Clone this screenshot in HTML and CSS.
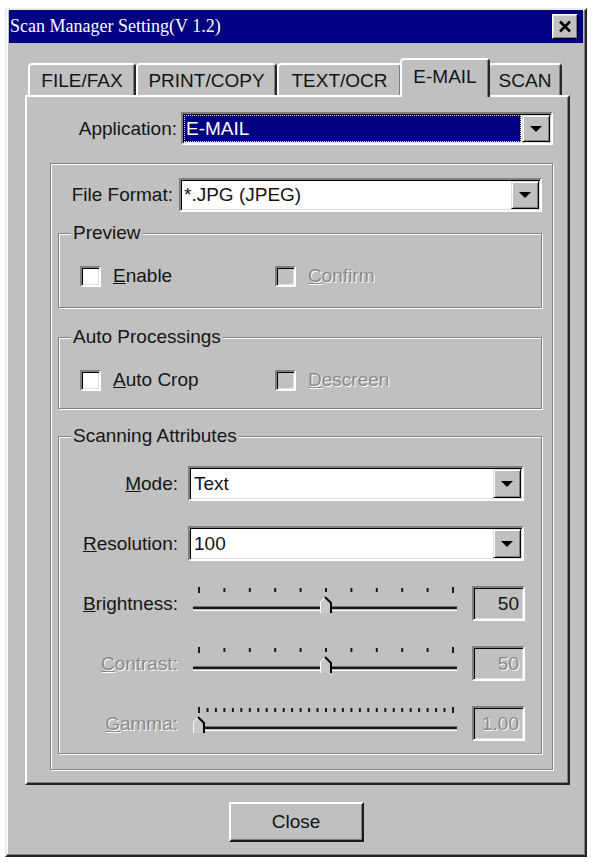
FILE: index.html
```html
<!DOCTYPE html>
<html>
<head>
<meta charset="utf-8">
<title>Scan Manager Setting</title>
<link rel="stylesheet" href="styles.css">
</head>
<body>
<div class="window">
  <div class="titlebar">
    <span class="title">Scan Manager Setting(V 1.2)</span>
    <button class="xbtn" aria-label="Close"><svg width="14" height="13" viewBox="0 0 14 13"><path d="M2 1.5L12 11.5M12 1.5L2 11.5" stroke="#000" stroke-width="2.6" fill="none"/></svg></button>
  </div>

  <div class="tabs">
    <div class="tab t1">FILE/FAX</div>
    <div class="tab t2">PRINT/COPY</div>
    <div class="tab t3">TEXT/OCR</div>
    <div class="tab t4 active">E-MAIL</div>
    <div class="tab t5">SCAN</div>
  </div>

  <div class="panel">
    <div class="app-row">
      <span class="lbl">Application:</span>
      <div class="combo app-combo">
        <div class="field selected"><span>E-MAIL</span></div>
        <div class="dd"><svg width="12" height="6" viewBox="0 0 12 6"><path d="M0 0h12L6 6z" fill="#000"/></svg></div>
      </div>
    </div>

    <div class="outer-group">
      <div class="ff-row">
        <span class="lbl">File Format:</span>
        <div class="combo ff-combo">
          <div class="field">*.JPG (JPEG)</div>
          <div class="dd"><svg width="12" height="6" viewBox="0 0 12 6"><path d="M0 0h12L6 6z" fill="#000"/></svg></div>
        </div>
      </div>

      <div class="group preview">
        <div class="legend">Preview</div>
        <div class="cb-row">
          <div class="cb-item first"><span class="cb"></span><span><u>E</u>nable</span></div>
          <div class="cb-item disabled"><span class="cb off"></span><span><u>C</u>onfirm</span></div>
        </div>
      </div>

      <div class="group auto">
        <div class="legend">Auto Processings</div>
        <div class="cb-row">
          <div class="cb-item first"><span class="cb"></span><span><u>A</u>uto Crop</span></div>
          <div class="cb-item disabled"><span class="cb off"></span><span><u>D</u>escreen</span></div>
        </div>
      </div>

      <div class="group scan">
        <div class="legend">Scanning Attributes</div>

        <div class="attr first-attr">
          <span class="lbl"><u>M</u>ode:</span>
          <div class="combo">
            <div class="field pad">Text</div>
            <div class="dd"><svg width="12" height="6" viewBox="0 0 12 6"><path d="M0 0h12L6 6z" fill="#000"/></svg></div>
          </div>
        </div>

        <div class="attr">
          <span class="lbl"><u>R</u>esolution:</span>
          <div class="combo">
            <div class="field pad">100</div>
            <div class="dd"><svg width="12" height="6" viewBox="0 0 12 6"><path d="M0 0h12L6 6z" fill="#000"/></svg></div>
          </div>
        </div>

        <div class="attr slider-row">
          <span class="lbl"><u>B</u>rightness:</span>
          <svg class="slider" width="274" height="35" viewBox="0 0 274 35">
            <path d="M11 1v6M36.4 2v4M61.8 2v4M87.2 2v4M112.6 2v4M138 2v4M163.4 2v4M188.8 2v4M214.2 2v4M239.6 2v4M265 1v6" stroke="#1a1a1a" stroke-width="2" fill="none"/>
            <rect x="5" y="20" width="264" height="1" fill="#707070"/>
            <rect x="5" y="21" width="264" height="2.5" fill="#1a1a1a"/>
            <rect x="5" y="23.5" width="264" height="1.5" fill="#fff"/>
            <path d="M132 27V16l5-5 6 6v10z" fill="#c8c8c8"/>
            <path d="M132.5 27V16l5-5" stroke="#fff" fill="none"/>
            <path d="M137 11l6 6v10" stroke="#000" stroke-width="2" fill="none"/>
          </svg>
          <div class="val">50</div>
        </div>

        <div class="attr slider-row dis">
          <span class="lbl"><u>C</u>ontrast:</span>
          <svg class="slider" width="274" height="35" viewBox="0 0 274 35">
            <path d="M11 1v6M36.4 2v4M61.8 2v4M87.2 2v4M112.6 2v4M138 2v4M163.4 2v4M188.8 2v4M214.2 2v4M239.6 2v4M265 1v6" stroke="#1a1a1a" stroke-width="2" fill="none"/>
            <rect x="5" y="20" width="264" height="1" fill="#707070"/>
            <rect x="5" y="21" width="264" height="2.5" fill="#1a1a1a"/>
            <rect x="5" y="23.5" width="264" height="1.5" fill="#fff"/>
            <path d="M132 27V16l5-5 6 6v10z" fill="#c8c8c8"/>
            <path d="M132.5 27V16l5-5" stroke="#fff" fill="none"/>
            <path d="M137 11l6 6v10" stroke="#000" stroke-width="2" fill="none"/>
          </svg>
          <div class="val">50</div>
        </div>

        <div class="attr slider-row dis">
          <span class="lbl"><u>G</u>amma:</span>
          <svg class="slider" width="274" height="35" viewBox="0 0 274 35">
            <path d="M11 1v6M19.5 2v4M27.9 2v4M36.4 2v4M44.9 2v4M53.3 2v4M61.8 2v4M70.3 2v4M78.7 2v4M87.2 2v4M95.7 2v4M104.1 2v4M112.6 2v4M121.1 2v4M129.5 2v4M138 2v4M146.5 2v4M154.9 2v4M163.4 2v4M171.9 2v4M180.3 2v4M188.8 2v4M197.3 2v4M205.7 2v4M214.2 2v4M222.7 2v4M231.1 2v4M239.6 2v4M248.1 2v4M256.5 2v4M265 1v6" stroke="#1a1a1a" stroke-width="2" fill="none"/>
            <rect x="5" y="20" width="264" height="1" fill="#707070"/>
            <rect x="5" y="21" width="264" height="2.5" fill="#1a1a1a"/>
            <rect x="5" y="23.5" width="264" height="1.5" fill="#fff"/>
            <path d="M5 27V16l5-5 6 6v10z" fill="#c8c8c8"/>
            <path d="M5.5 27V16l5-5" stroke="#fff" fill="none"/>
            <path d="M10 11l6 6v10" stroke="#000" stroke-width="2" fill="none"/>
          </svg>
          <div class="val">1.00</div>
        </div>
      </div>
    </div>
  </div>

  <div class="footer">
    <button class="close">Close</button>
  </div>
</div>
</body>
</html>
```

FILE: styles.css
```css
* { box-sizing: border-box; }

html, body {
  margin: 0;
  padding: 0;
  background: #fff;
}

body {
  font-family: "Liberation Sans", Arial, sans-serif;
  font-size: 19px;
  color: #141414;
}

.window {
  margin: 8px 0 0 5px;
  width: 582px;
  height: 849px;
  background: #c0c0c0;
  border: 2px solid;
  border-color: #ececec #262626 #262626 #ececec;
  box-shadow: inset -1px -1px #808080, inset 1px 1px #fff;
  padding: 0 2px 2px 2px;
}

/* title bar */
.titlebar {
  height: 33px;
  background: #000080;
  display: flex;
  align-items: center;
  justify-content: space-between;
  padding: 0 5px 0 1px;
}

.title {
  font-family: "Liberation Serif", "Times New Roman", serif;
  font-size: 18px;
  color: #fff;
}

.xbtn {
  width: 26px;
  height: 25px;
  padding: 0;
  background: #c0c0c0;
  border: 1px solid;
  border-color: #fff #000 #000 #fff;
  box-shadow: inset -1px -1px #808080, inset 1px 1px #dfdfdf;
  display: flex;
  align-items: center;
  justify-content: center;
}

/* tabs */
.tabs {
  display: flex;
  align-items: flex-end;
  height: 37px;
  margin: 15px 0 0 19px;
}

.tab {
  height: 32px;
  background: #c0c0c0;
  border: 2px solid;
  border-bottom: 0;
  border-color: #fff #262626 transparent #fff;
  border-radius: 4px 4px 0 0;
  box-shadow: inset -1px 0 #808080;
  display: flex;
  align-items: center;
  justify-content: center;
  padding-top: 1px;
}

.t1 { width: 108px; }
.t2 { width: 141px; }
.t3 { width: 125px; }
.t4 { width: 90px; }
.t5 { width: 74px; }

.tab.active {
  height: 39px;
  margin: 0 -2px -2px -2px;
  position: relative;
  z-index: 1;
  padding: 0 0 4px 0;
}

/* panel */
.panel {
  margin-left: 16px;
  width: 545px;
  height: 690px;
  border: 2px solid;
  border-color: #fff #262626 #262626 #fff;
  box-shadow: inset -1px -1px #808080;
  padding: 15px 15px 0 0;
}

.app-row {
  display: flex;
  align-items: stretch;
  height: 33px;
}

.app-row .lbl,
.ff-row .lbl {
  flex: 1;
  text-align: right;
  align-self: center;
}

.app-row .lbl { padding-right: 4px; }
.ff-row .lbl { padding-right: 6px; }

.app-combo { width: 372px; }

/* combo box */
.combo {
  display: flex;
  height: 100%;
  background: #fff;
  border: 2px solid;
  border-color: #808080 #fff #fff #808080;
  box-shadow: inset 1px 1px #000, inset -1px -1px #dfdfdf;
  padding: 1px;
}

.field {
  flex: 1;
  display: flex;
  align-items: center;
  padding-left: 2px;
  white-space: nowrap;
}

.field.pad { padding-left: 3px; }

.field.selected {
  background: #000080;
  color: #fff;
  outline: 1px dotted #e6e6a0;
  outline-offset: -1px;
  margin-right: 1px;
}

.dd {
  width: 28px;
  background: #c0c0c0;
  border: 1px solid;
  border-color: #dfdfdf #000 #000 #dfdfdf;
  box-shadow: inset 1px 1px #fff, inset -1px -1px #808080;
  display: flex;
  align-items: center;
  justify-content: center;
}

/* groups */
.outer-group {
  margin: 18px 0 0 23px;
  height: 607px;
  border: 1px solid #808080;
  box-shadow: inset 1px 1px #fff, 1px 1px #fff;
  padding: 14px 10px 0 7px;
}

.ff-row {
  display: flex;
  height: 34px;
}

.ff-combo { width: 363px; }

.group {
  border: 1px solid #808080;
  box-shadow: inset 1px 1px #fff, 1px 1px #fff;
}

.legend {
  display: table;
  margin: -12px 0 0 12px;
  padding: 0 2px;
  line-height: 22px;
  background: #c0c0c0;
}

.preview { margin-top: 21px; height: 75px; }
.auto { margin-top: 29px; height: 72px; }
.scan { margin-top: 27px; height: 318px; padding-right: 17px; }

.cb-row {
  display: flex;
  align-items: center;
  height: 22px;
  margin-top: 21px;
  padding-left: 21px;
}

.cb-item {
  display: flex;
  align-items: center;
  gap: 12px;
}

.cb-item.first { width: 195px; }

.cb {
  width: 21px;
  height: 21px;
  background: #fff;
  border: 2px solid;
  border-color: #808080 #fff #fff #808080;
  box-shadow: inset 1px 1px #000, inset -1px -1px #dfdfdf;
}

.cb.off { background: #c0c0c0; }

.disabled,
.dis .lbl,
.dis .val {
  color: #8a8a8a;
  text-shadow: 1px 1px 0 #fff;
}

/* scanning attribute rows */
.attr {
  display: grid;
  grid-template-columns: 119px 1fr;
  column-gap: 10px;
  align-items: center;
  height: 35px;
  margin-top: 25px;
}

.attr.first-attr { margin-top: 19px; }

.attr .lbl { text-align: right; }

.attr .combo { height: 35px; }

.slider-row {
  grid-template-columns: 119px 274px 53px;
}

.slider { display: block; }

.val {
  height: 35px;
  border: 2px solid;
  border-color: #808080 #fff #fff #808080;
  box-shadow: inset 1px 1px #000, inset -1px -1px #dfdfdf;
  text-align: right;
  padding-right: 4px;
  line-height: 31px;
}

/* footer */
.footer {
  display: flex;
  justify-content: center;
  padding-top: 17px;
}

.close {
  width: 135px;
  height: 40px;
  font: inherit;
  color: #141414;
  background: #c0c0c0;
  border: 2px solid;
  border-color: #fff #1a1a1a #1a1a1a #fff;
  box-shadow: inset -1px -1px #808080;
  padding: 0;
}
```
